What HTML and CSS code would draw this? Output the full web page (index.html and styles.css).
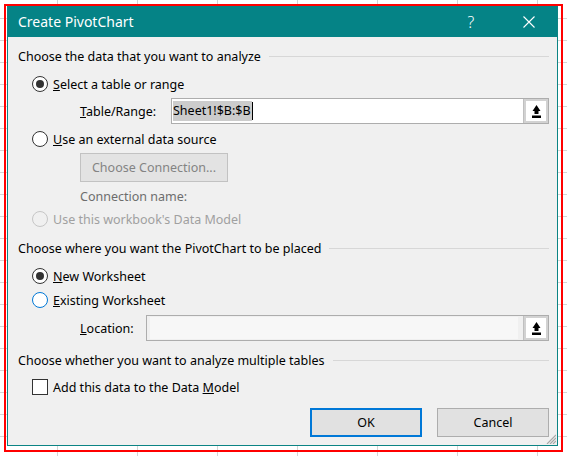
FILE: index.html
```html
<!DOCTYPE html>
<html>
<head>
<meta charset="utf-8">
<title>Create PivotChart</title>
<link rel="stylesheet" href="styles.css">
</head>
<body>
<div class="sheet"></div>
<div class="dialog">
  <div class="titlebar">
    <span class="title">Create PivotChart</span>
    <span class="help">?</span>
    <span class="close"><svg width="12" height="12" viewBox="0 0 12 12"><path d="M0.5 0.5L11.5 11.5M11.5 0.5L0.5 11.5" stroke="#fff" stroke-width="1.1" fill="none"/></svg></span>
  </div>
  <div class="body">
    <div class="ghead"><span>Choose the data that you want to analyze</span><i class="rule"></i></div>
    <div class="opt r1"><span class="radio on"></span><span><u>S</u>elect a table or range</span></div>
    <div class="field f1">
      <span class="flabel w1"><u>T</u>able/Range:</span>
      <div class="refedit">
        <div class="refinput"><span class="sel">Sheet1!$B:$B</span><span class="caret"></span></div>
        <div class="refbtn"><svg width="9" height="13" viewBox="0 0 9 13"><path d="M4.5 0L8.5 6H6.5V9H2.5V6H0.5Z" fill="#000"/><rect x="0" y="10.5" width="9" height="2.5" fill="#000"/></svg></div>
      </div>
    </div>
    <div class="opt r2"><span class="radio"></span><span><u>U</u>se an external data source</span></div>
    <div class="connbtn">Choose Connection...</div>
    <div class="connname">Connection name:</div>
    <div class="opt r3 disabled"><span class="radio dis"></span><span>Use this workbook's Data Model</span></div>
    <div class="ghead g2"><span>Choose where you want the PivotChart to be placed</span><i class="rule"></i></div>
    <div class="opt r4"><span class="radio on"></span><span><u>N</u>ew Worksheet</span></div>
    <div class="opt r5"><span class="radio focus"></span><span><u>E</u>xisting Worksheet</span></div>
    <div class="field f2">
      <span class="flabel w2"><u>L</u>ocation:</span>
      <div class="refedit">
        <div class="refinput dim"></div>
        <div class="refbtn"><svg width="9" height="13" viewBox="0 0 9 13"><path d="M4.5 0L8.5 6H6.5V9H2.5V6H0.5Z" fill="#000"/><rect x="0" y="10.5" width="9" height="2.5" fill="#000"/></svg></div>
      </div>
    </div>
    <div class="ghead g3"><span>Choose whether you want to analyze multiple tables</span><i class="rule"></i></div>
    <div class="opt r6"><span class="check"></span><span>Add this data to the Data <u>M</u>odel</span></div>
    <div class="buttons">
      <div class="btn ok">OK</div>
      <div class="btn">Cancel</div>
    </div>
  </div>
  <svg class="grip" width="10" height="10" viewBox="0 0 10 10"><path d="M10 1L1 10M10 4L4 10M10 7L7 10" stroke="#a8a8a8" stroke-width="1.2" fill="none"/></svg>
</div>
<div class="annot"></div>
</body>
</html>
```
FILE: styles.css
```css
html, body {
  margin: 0;
  padding: 0;
}
body {
  width: 567px;
  height: 456px;
  overflow: hidden;
  position: relative;
  background: #fff;
  font-family: "Noto Sans", "Open Sans", sans-serif;
  font-size: 12.5px;
  color: #000;
}
.sheet {
  position: absolute;
  inset: 0;
  background-image:
    linear-gradient(to right, #d4d4d4 1px, transparent 1px),
    linear-gradient(to bottom, #d4d4d4 1px, transparent 1px);
  background-size: 80px 100%, 100% 22px;
  background-position: 57px 0, 0 18px;
}
.dialog {
  position: absolute;
  left: 7px;
  top: 5px;
  width: 549px;
  height: 439px;
  border: 1px solid #0b8484;
  background: #f0f0f0;
  display: flex;
  flex-direction: column;
}
.titlebar {
  height: 31px;
  background: #058386;
  color: #fff;
  display: flex;
  align-items: center;
  padding-left: 10px;
  padding-right: 21px;
}
.title {
  font-size: 14px;
  flex: 1;
}
.help {
  width: 20px;
  text-align: center;
  font-size: 16px;
  font-weight: 300;
  margin-right: 41px;
}
.close {
  width: 14px;
  height: 12px;
  display: flex;
  justify-content: center;
}
.body {
  padding: 9px 8px 0 10px;
  display: flex;
  flex-direction: column;
}
.ghead {
  height: 20px;
  display: flex;
  align-items: center;
}
.rule {
  flex: 1;
  height: 1px;
  background: #d7d7d7;
  margin-left: 8px;
}
.opt {
  height: 20px;
  display: flex;
  align-items: center;
  padding-left: 14px;
  gap: 5px;
}
.radio {
  width: 14px;
  height: 14px;
  border: 1px solid #333;
  border-radius: 50%;
  background: #fff;
  display: flex;
  align-items: center;
  justify-content: center;
}
.radio.on::after {
  content: "";
  width: 8px;
  height: 8px;
  border-radius: 50%;
  background: #333;
}
.radio.focus {
  border-color: #0078d7;
}
.radio.dis {
  border-color: #c6c6c6;
  background: #f0f0f0;
}
.disabled {
  color: #a0a0a0;
}
.check {
  width: 14px;
  height: 14px;
  border: 1px solid #333;
  background: #fff;
}
.r1 { margin-top: 8px; }
.r2 { margin-top: 5px; }
.r3 { margin-top: 4px; }
.g2 { margin-top: 9px; }
.r4 { margin-top: 8px; }
.r5 { margin-top: 4px; }
.g3 { margin-top: 9px; }
.r6 { margin-top: 7px; }
.field {
  display: flex;
  align-items: center;
  padding-left: 62px;
  height: 26px;
}
.f1 { margin-top: 4px; }
.f2 { margin-top: 5px; }
.flabel.w1 { width: 91px; }
.flabel.w2 { width: 66px; }
.refedit {
  flex: 1;
  height: 24px;
  border: 1px solid #adadad;
  background: #fff;
  display: flex;
}
.refinput {
  flex: 1;
  display: flex;
  align-items: center;
  padding-left: 1px;
}
.refinput.dim {
  background: #f7f7f7;
  margin: 1px 5px 1px 3px;
}
.f2 .refedit {
  background: #f0f0f0;
}
.sel {
  background: #cccccc;
  height: 20px;
  line-height: 20px;
  padding-right: 1px;
}
.caret {
  width: 1px;
  height: 18px;
  background: #000;
}
.refbtn {
  width: 20px;
  border-left: 1px solid #c0c0c0;
  background: #fff;
  box-shadow: inset 0 0 0 2px #d2d2d2;
  display: flex;
  align-items: center;
  justify-content: center;
  padding: 0 2px;
}
.connbtn {
  margin-top: 4px;
  margin-left: 62px;
  width: 146px;
  height: 27px;
  border: 1px solid #c2c2c2;
  background: #e3e3e3;
  color: #838383;
  display: flex;
  align-items: center;
  justify-content: center;
}
.connname {
  margin-top: 7px;
  margin-left: 62px;
  height: 16px;
  line-height: 16px;
  color: #6d6d6d;
}
.buttons {
  margin-top: 11px;
  display: flex;
  justify-content: flex-end;
  gap: 15px;
}
.btn {
  width: 110px;
  height: 27px;
  border: 1px solid #adadad;
  background: #e1e1e1;
  display: flex;
  align-items: center;
  justify-content: center;
}
.btn.ok {
  border: 2px solid #0078d7;
  width: 108px;
  height: 25px;
}
.grip {
  position: absolute;
  right: 1px;
  bottom: 1px;
}
.annot {
  position: absolute;
  left: 4px;
  top: 4px;
  width: 559px;
  height: 448px;
  box-sizing: border-box;
  border: 2px solid #ff0000;
}
```
